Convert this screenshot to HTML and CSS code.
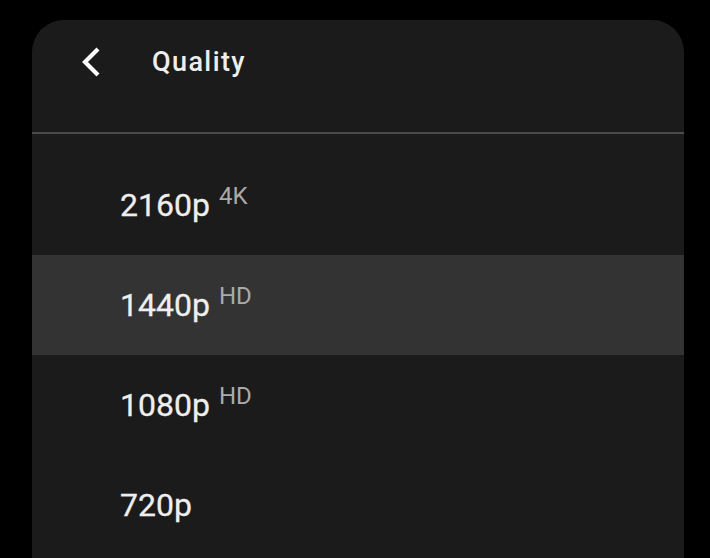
FILE: index.html
```html
<!DOCTYPE html>
<html lang="en">
  <head>
    <meta charset="UTF-8" />
    <meta name="viewport" content="width=device-width, initial-scale=1.0" />
    <title>Quality</title>
    <link rel="stylesheet" href="styles.css">
  </head>
  <body>
    <div class="panel">
      <div class="header">
        <div class="back">
          <svg width="22" height="32" viewBox="0 0 22 32">
            <polyline points="18,3 5,16 18,29" fill="none" stroke="#fff" stroke-width="4.2" />
          </svg>
        </div>
        <span class="title">Quality</span>
      </div>
      <div class="list">
        <div class="row">
          <span class="label">2160p</span><span class="badge">4K</span>
        </div>
        <div class="row selected">
          <span class="label">1440p</span><span class="badge">HD</span>
        </div>
        <div class="row">
          <span class="label">1080p</span><span class="badge">HD</span>
        </div>
        <div class="row">
          <span class="label">720p</span>
        </div>
      </div>
    </div>
  </body>
</html>
```
FILE: styles.css
```css
body {
  margin: 0;
  background: #000;
  font-family: Roboto, "Noto Sans", sans-serif;
  height: 558px;
  overflow: hidden;
}
.panel {
  margin: 20px 0 0 32px;
  width: 652px;
  height: 560px;
  background: #1b1b1b;
  border-radius: 32px 32px 0 0;
}
.header {
  display: flex;
  align-items: center;
  height: 44px;
  padding: 20px 0 48px 0;
  border-bottom: 2px solid #4a4a4a;
}
.back {
  display: flex;
  margin-left: 48px;
  width: 22px;
}
.title {
  margin-left: 50px;
  font-size: 27px;
  font-weight: 500;
  letter-spacing: 1.4px;
  color: #eee;
}
.list {
  padding-top: 21px;
}
.row {
  display: flex;
  align-items: center;
  height: 100px;
  padding-left: 88px;
}
.row.selected {
  background: #333;
}
.label {
  font-size: 32px;
  color: #eee;
  -webkit-text-stroke: 0.3px #eee;
}
.badge {
  margin-left: 9px;
  font-size: 24px;
  color: #aaa;
  position: relative;
  top: -9px;
}
```
